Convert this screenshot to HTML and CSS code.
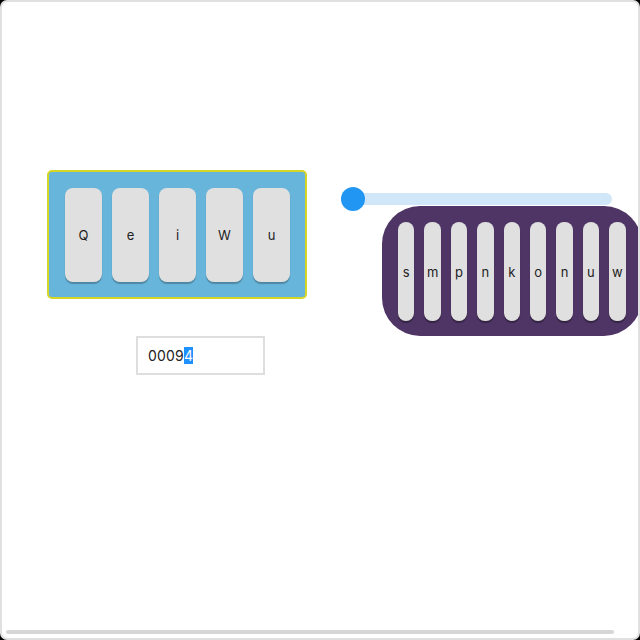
FILE: index.html
```html
<!DOCTYPE html>
<html lang="en">
<head>
<meta charset="utf-8">
<title>Keys</title>
<link rel="stylesheet" href="styles.css">
</head>
<body>
<div class="frame">
  <div class="stage">
    <div class="left-col">
      <div class="key-panel">
        <div class="key">Q</div>
        <div class="key">e</div>
        <div class="key">i</div>
        <div class="key">W</div>
        <div class="key">u</div>
      </div>
      <div class="text-field"><span>0009</span><span class="sel">4</span></div>
    </div>
    <div class="right-col">
      <div class="slider"><div class="thumb"></div></div>
      <div class="pill-panel">
        <div class="slim-key">s</div>
        <div class="slim-key">m</div>
        <div class="slim-key">p</div>
        <div class="slim-key">n</div>
        <div class="slim-key">k</div>
        <div class="slim-key">o</div>
        <div class="slim-key">n</div>
        <div class="slim-key">u</div>
        <div class="slim-key">w</div>
      </div>
    </div>
  </div>
  <div class="hscroll"></div>
</div>
</body>
</html>
```
FILE: styles.css
```css
html { background: #000; }
body { margin: 0; font-family: Inter, "Open Sans", sans-serif; }

.frame {
  position: relative;
  width: 640px;
  height: 640px;
  box-sizing: border-box;
  border: 2px solid #e0e0e0;
  border-radius: 7px;
  background: #fff;
  overflow: hidden;
}

.stage {
  display: flex;
  align-items: flex-start;
}

.left-col {
  flex-shrink: 0;
  margin-top: 168px;
  margin-left: 45px;
  display: flex;
  flex-direction: column;
  align-items: flex-start;
}

.key-panel {
  display: flex;
  gap: 10px;
  padding: 16px 15px 15px 16px;
  background: #67b5db;
  border: 2px solid #d6d626;
  border-radius: 5px;
}

.key {
  width: 37px;
  height: 94px;
  border-radius: 8px;
  background: #e0e0e0;
  box-shadow: 0 2px 1px rgba(0, 0, 0, 0.25);
  display: flex;
  align-items: center;
  justify-content: center;
  font-size: 13px;
  color: #222;
}

.text-field {
  margin-top: 37px;
  margin-left: 89px;
  width: 129px;
  height: 39px;
  box-sizing: border-box;
  border: 2px solid #dedede;
  padding-left: 10px;
  display: flex;
  align-items: center;
  font-size: 14px;
  color: #222;
  letter-spacing: 0.2px;
}

.sel {
  background: #1e90ff;
  color: #fff;
  line-height: 17px;
}

.right-col {
  flex-shrink: 0;
  margin-left: 34px;
  margin-top: 191px;
}

.slider {
  position: relative;
  width: 271px;
  height: 12px;
  border-radius: 6px;
  background: #d0e6f9;
}

.thumb {
  position: absolute;
  left: 0;
  top: -6px;
  width: 24px;
  height: 24px;
  border-radius: 50%;
  background: #2196f3;
}

.pill-panel {
  flex-shrink: 0;
  margin-top: 1px;
  margin-left: 41px;
  width: 260px;
  box-sizing: border-box;
  display: flex;
  gap: 10px;
  padding: 16px 16px 15px 16px;
  background: #4f3565;
  border-radius: 38px;
}

.slim-key {
  flex: 0 0 16.4px;
  height: 99px;
  border-radius: 8px;
  background: #e0e0e0;
  box-shadow: 0 2px 1px rgba(0, 0, 0, 0.35);
  display: flex;
  align-items: center;
  justify-content: center;
  font-size: 13px;
  color: #222;
}

.hscroll {
  position: absolute;
  left: 4px;
  right: 24px;
  bottom: 4px;
  height: 4px;
  border-radius: 2px;
  background: #d6d6d6;
}
```
